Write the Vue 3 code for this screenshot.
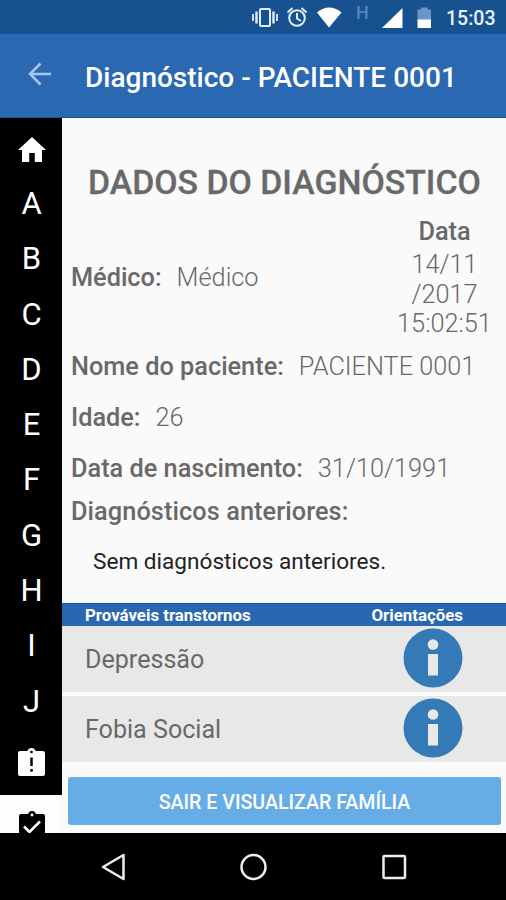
<script setup>
const letters = ['A', 'B', 'C', 'D', 'E', 'F', 'G', 'H', 'I', 'J']
const disorders = ['Depressão', 'Fobia Social']
</script>

<template>
  <div class="screen">
    <div class="status">
      <svg class="s-icons" width="192" height="34" viewBox="0 0 192 34">
        <g fill="none" stroke="#e4eef8" stroke-width="2">
          <rect x="20" y="9" width="10" height="17" rx="1" />
          <path d="M16.500 11.500v12M33.500 11.500v12" stroke-width="2.400" />
          <path d="M13 14v7M37 14v7" stroke-width="1.800" />
          <circle cx="57" cy="18" r="7.800" />
          <path d="M57 13v5.500l4 2.500M47.500 12.500l5-4.500M61.500 8l5 4.500" />
        </g>
        <path d="M77 12.500Q89 2.500 101.500 12.500L89 27.500z" fill="#fff" />
        <path d="M162.500 8v20h-20.500z" fill="#fff" />
        <path d="M177.500 9.500h3.500V7.500h6.500v2h3.500v11h-13.500z" fill="#6b96c8" />
        <path d="M177.500 19.500h13.500v8.500h-13.500z" fill="#fff" />
      </svg>
      <span class="network">H</span>
      <span class="time">15:03</span>
    </div>

    <header class="bar">
      <svg class="back" width="24" height="24" viewBox="0 0 24 24" fill="none" stroke="#a9c6ed" stroke-width="2.500">
        <path d="M23 12H3M12.500 1.500L2 12l10.500 10.500" />
      </svg>
      <h1 class="bar-title">Diagnóstico - PACIENTE 0001</h1>
    </header>

    <div class="body">
      <nav class="side">
        <div class="home">
          <svg width="28" height="26" viewBox="0 0 28 26" fill="#fff">
            <path d="M14 0L0 13h4v12h7.200v-9h5.600v9H24V13h4z" />
          </svg>
        </div>
        <div v-for="l in letters" :key="l" class="letter">{{ l }}</div>
        <div class="late">
          <svg width="27" height="29" viewBox="0 0 26 29" preserveAspectRatio="none">
            <path d="M2 3h7q1-3 4-3t4 3h7q2 0 2 2v21q0 2-2 2H2q-2 0-2-2V5q0-2 2-2z" fill="#fff" />
            <circle cx="13" cy="4" r="1.300" />
            <path d="M11.800 9.500h2.400v8.500h-2.400zM11.800 21h2.400v2.700h-2.400z" />
          </svg>
        </div>
        <div class="done">
          <svg width="26" height="29" viewBox="0 0 26 29">
            <path d="M2 3h7q1-3 4-3t4 3h7q2 0 2 2v21q0 2-2 2H2q-2 0-2-2V5q0-2 2-2z" />
            <circle cx="13" cy="4" r="1.400" fill="#fff" />
            <path d="M5 15.500l5.500 5.500L21 10.500" fill="none" stroke="#fff" stroke-width="2.600" />
          </svg>
        </div>
      </nav>

      <main class="main">
        <h2 class="heading">DADOS DO DIAGNÓSTICO</h2>
        <section class="doctor-row">
          <p class="field doctor"><b>Médico:</b><span>Médico</span></p>
          <div class="date">
            <b class="date-label">Data</b>
            <span>14/11</span>
            <span>/2017</span>
            <span>15:02:51</span>
          </div>
        </section>
        <p class="field row"><b>Nome do paciente:</b><span>PACIENTE 0001</span></p>
        <p class="field row"><b>Idade:</b><span>26</span></p>
        <p class="field row"><b>Data de nascimento:</b><span>31/10/1991</span></p>
        <p class="field prev"><b>Diagnósticos anteriores:</b></p>
        <p class="none">Sem diagnósticos anteriores.</p>

        <div class="thead">
          <span>Prováveis transtornos</span>
          <span>Orientações</span>
        </div>
        <div v-for="d in disorders" :key="d" class="item">
          <span class="item-name">{{ d }}</span>
          <svg class="info" width="60" height="60" viewBox="0 0 60 60">
            <circle cx="30" cy="30" r="29.500" fill="#337ab7" />
            <circle cx="30" cy="16.500" r="5.300" fill="#e8e8e8" />
            <path d="M25 26h10v21.500H25z" fill="#e8e8e8" />
          </svg>
        </div>
        <button class="exit"><span>SAIR E VISUALIZAR FAMÍLIA</span></button>
      </main>
    </div>

    <footer class="keys">
      <svg width="506" height="67" viewBox="0 0 506 67" fill="none" stroke="#eee" stroke-width="2.500">
        <path d="M123.500 22v24L103 34z" stroke-linejoin="round" />
        <circle cx="253.500" cy="34" r="12" />
        <rect x="383.500" y="23" width="21.500" height="22" rx="1" />
      </svg>
    </footer>
  </div>
</template>

<style>
body {
  margin: 0;
}
</style>

<style scoped>
.screen {
  width: 506px;
  height: 900px;
  display: flex;
  flex-direction: column;
  overflow: hidden;
  background: #fafafa;
  color: #696969;
  font-family: Roboto, sans-serif;
}
h1, h2, p {
  margin: 0;
}
b {
  font-weight: 500;
}
span, b {
  white-space: nowrap;
}
.status {
  height: 34px;
  flex: none;
  display: flex;
  background: #18518f;
  color: #e8f1fb;
  padding-left: 240px;
  position: relative;
}
.s-icons {
  flex: none;
}
.network {
  position: absolute;
  left: 356px;
  top: 4px;
  font-size: 18px;
  font-weight: 500;
  line-height: 18px;
  color: #5385bd;
}
.time {
  margin-left: 14px;
  font-size: 19.500px;
  font-weight: 500;
  line-height: 37px;
}
.bar {
  height: 84px;
  flex: none;
  display: flex;
  align-items: center;
  background: #2a68b1;
  box-sizing: border-box;
  border-bottom: 1px solid #145696;
  color: #fff;
}
.back {
  margin: -4px 0 0 28px;
}
.bar-title {
  margin: 3px 0 0 33px;
  font-size: 28px;
  font-weight: 500;
  white-space: nowrap;
}
.body {
  height: 715px;
  flex: none;
  display: flex;
}
.side {
  width: 62px;
  flex: none;
  background: #000;
  overflow: hidden;
}
.home {
  height: 58px;
  box-sizing: border-box;
  display: flex;
  justify-content: center;
  align-items: center;
  padding: 6px 0 0 1px;
}
.letter {
  height: 55.300px;
  line-height: 55.300px;
  padding-left: 1px;
  text-align: center;
  font-size: 31px;
  color: #fff;
}
.late {
  height: 66px;
  box-sizing: border-box;
  padding: 19px 0 0 1px;
  text-align: center;
}
.done {
  height: 60px;
  box-sizing: border-box;
  padding: 16px 0 0 1px;
  text-align: center;
  background: #fdfdfd;
}
.main {
  flex: 1;
  min-width: 0;
  display: flex;
  flex-direction: column;
}
.heading {
  margin-top: 43px;
  height: 43px;
  line-height: 44px;
  padding-left: 26px;
  font-size: 33.850px;
  font-weight: 500;
  -webkit-text-stroke: 0.300px;
  white-space: nowrap;
}
.doctor-row {
  height: 137px;
  display: flex;
  justify-content: space-between;
}
.field {
  display: flex;
  align-items: center;
  padding-left: 9px;
  font-size: 25.300px;
}
.field span {
  margin-left: 15px;
  font-weight: 300;
}
.doctor {
  height: 147px;
}
.date {
  width: 123px;
  padding-top: 12px;
  display: flex;
  flex-direction: column;
  align-items: center;
  font-size: 25.300px;
  font-weight: 300;
  line-height: 29.600px;
}
.date-label {
  height: 34px;
  line-height: 31px;
}
.row {
  height: 51px;
}
.prev {
  height: 35px;
  letter-spacing: 0.080px;
}
.none {
  height: 65px;
  line-height: 65px;
  padding-left: 31px;
  font-size: 22.600px;
  color: #222;
  white-space: nowrap;
}
.thead {
  height: 23px;
  margin-top: auto;
  display: flex;
  justify-content: space-between;
  padding: 0 43px 0 23px;
  box-sizing: border-box;
  background: #2967b0;
  border-top: 1px solid #14549a;
  color: #fff;
  font-size: 16.850px;
  font-weight: 700;
  line-height: 23px;
}
.item {
  height: 66px;
  margin-bottom: 4px;
  display: flex;
  align-items: center;
  justify-content: space-between;
  padding: 0 43px 0 23px;
  background: #e8e8e8;
  font-size: 25.100px;
}
.info {
  margin-top: -2px;
}
.exit {
  height: 48px;
  margin: 11px 5px 8px 6px;
  padding: 2px 0 0;
  flex: none;
  border: 0;
  border-radius: 3px;
  background: #66ade8;
  color: #fff;
  font: 500 19.600px Roboto, sans-serif;
}
.keys {
  height: 67px;
  flex: none;
  background: #000;
}
</style>
